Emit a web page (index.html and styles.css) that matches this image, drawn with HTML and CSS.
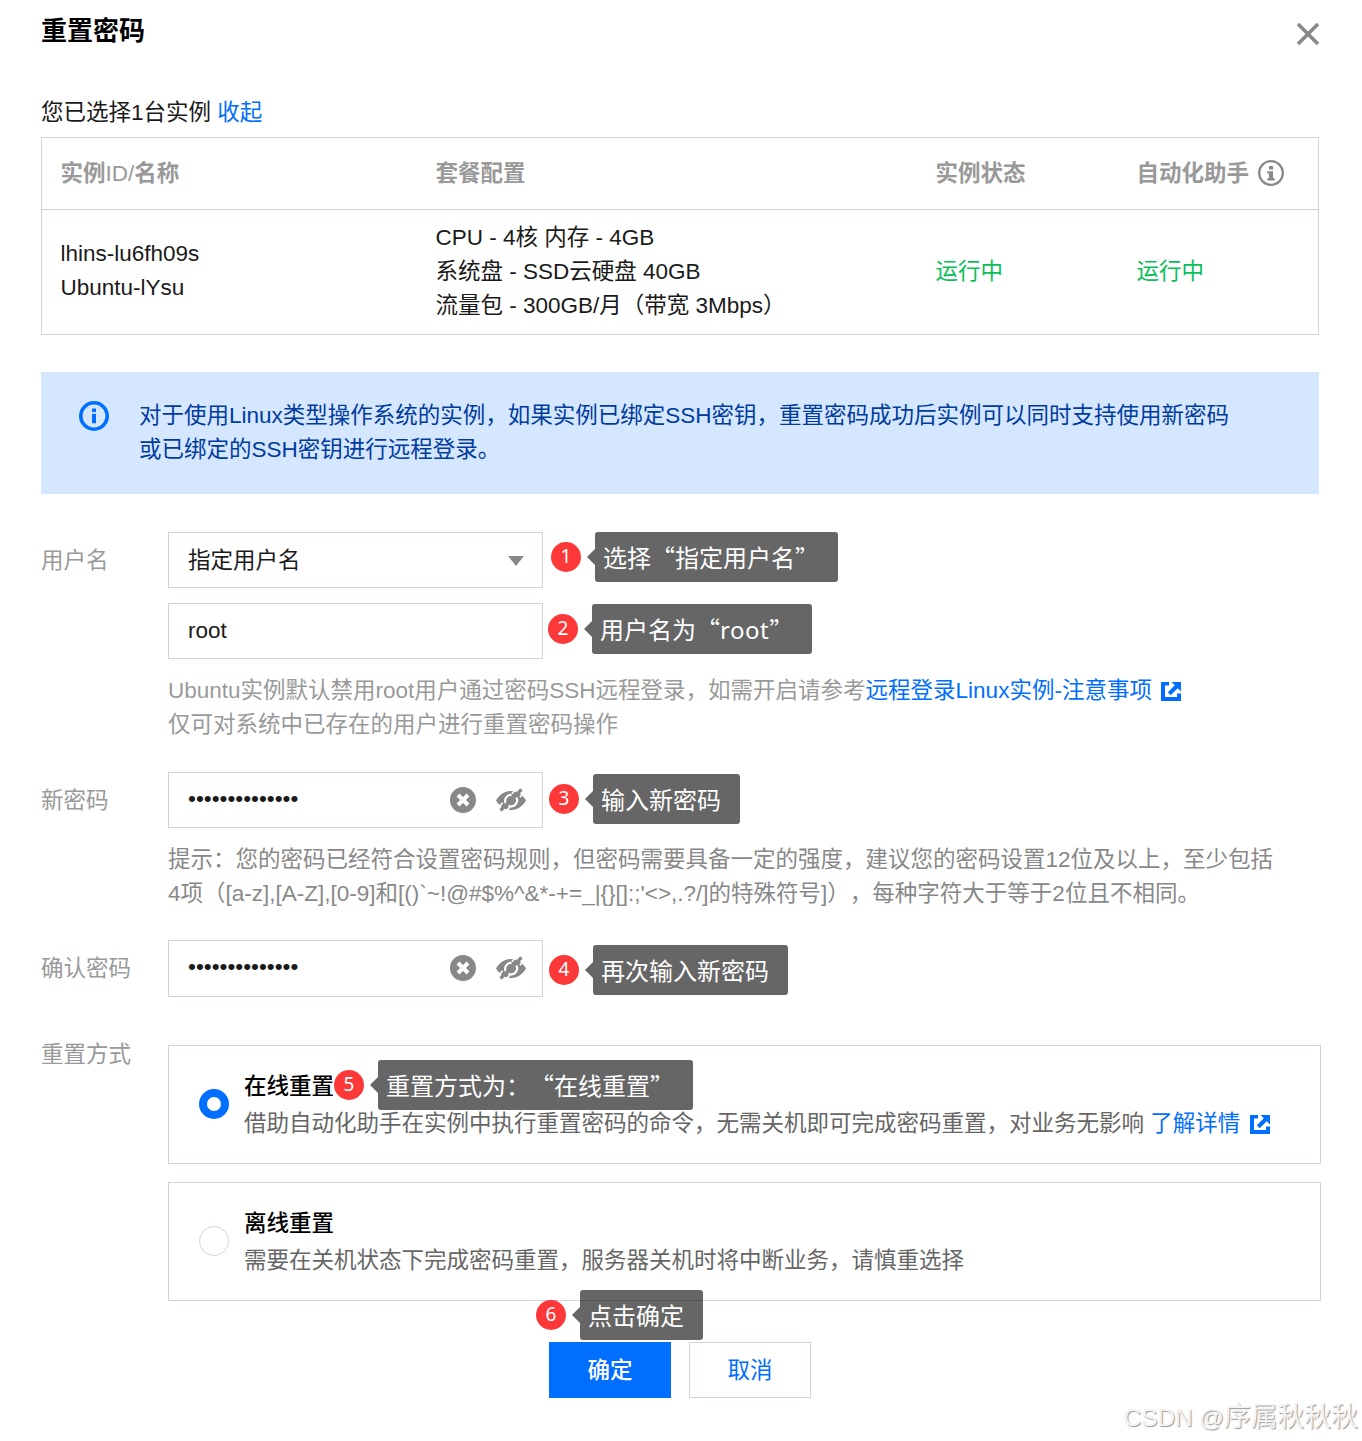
FILE: index.html
```html
<!DOCTYPE html>
<html lang="zh-CN">
<head>
<meta charset="utf-8">
<title>重置密码</title>
<link rel="stylesheet" href="styles.css">
</head>
<body>
<svg class="sprite" width="0" height="0">
  <symbol id="external" viewBox="0 0 20 20"><path fill="currentColor" d="M0 1h8v3.500H4v11.500h12v-3.500h4V20H0zM10.500 1H20v9.500l-3.300-3.300-7 7-2.900-2.900 7-7z"/></symbol>
  <symbol id="clear" viewBox="0 0 26 26"><circle cx="13" cy="13" r="13" fill="currentColor"/><path d="M8 8l10 10M18 8L8 18" stroke="#fff" stroke-width="4"/></symbol>
  <symbol id="eye-off" viewBox="0 0 30 24"><path fill="currentColor" d="M0 12.500C4 6 9 3 15 3s11 3 15 9.500c-4 6.500-9 9.500-15 9.500S4 19 0 12.500z"/><path d="M9.800 15.500A6 6 0 0 1 15.500 6.800M20.300 9.500A6 6 0 0 1 12.500 17.800" fill="none" stroke="#fff" stroke-width="2.200"/><path d="M1 20.500L21.500 0M9 24L29 4" stroke="#fff" stroke-width="1.600" stroke-dasharray="8 13 12"/><path d="M4.500 22.500L25.500 1.500" stroke="currentColor" stroke-width="3.200"/></symbol>
</svg>
<main class="dialog">
  <header class="dialog-head">
    <h1>重置密码</h1>
    <svg class="close" viewBox="0 0 22 22"><path d="M1 1l20 20M21 1L1 21"/></svg>
  </header>

  <p class="summary">您已选择1台实例 <a>收起</a></p>

  <section class="table">
    <div class="row table-head">
      <div>实例<span class="latin">ID/</span>名称</div><div>套餐配置</div><div>实例状态</div>
      <div class="with-icon">自动化助手
        <svg class="info" viewBox="0 0 26 26"><circle cx="13" cy="13" r="11.800" fill="none" stroke="currentColor" stroke-width="2.300"/><path fill="currentColor" d="M11 6h4v3.500h-4zM9.300 11.300H15v7h1.700v2.200H9.300v-2.200H11v-4.800H9.300z"/></svg>
      </div>
    </div>
    <div class="row table-body">
      <div>lhins-lu6fh09s<br>Ubuntu-lYsu</div>
      <div class="plan">CPU - 4核 内存 - 4GB<br>系统盘 - SSD云硬盘 40GB<br>流量包 - 300GB/月（带宽 3Mbps）</div>
      <div class="running">运行中</div>
      <div class="running">运行中</div>
    </div>
  </section>

  <section class="alert">
    <svg class="alert-icon" viewBox="0 0 30 30"><circle cx="15" cy="15" r="13.200" fill="none" stroke="currentColor" stroke-width="3.600"/><path fill="currentColor" d="M13 7.500h4v3.500h-4zM13 12.800h4v9.500h-4z"/></svg>
    <p>对于使用Linux类型操作系统的实例，如果实例已绑定SSH密钥，重置密码成功后实例可以同时支持使用新密码<br>或已绑定的SSH密钥进行远程登录。</p>
  </section>

  <section class="form">
    <div class="field user">
      <label>用户名</label>
      <div>
        <div class="input select"><span class="value">指定用户名</span><svg class="caret" viewBox="0 0 16 10"><path d="M0 0h16L8 10z" fill="currentColor"/></svg></div>
        <div class="input second">root</div>
        <p class="hint light">Ubuntu实例默认禁用root用户通过密码SSH远程登录，如需开启请参考<a>远程登录Linux实例-注意事项 <svg class="ext"><use href="#external"/></svg></a><br>仅可对系统中已存在的用户进行重置密码操作</p>
      </div>
    </div>
    <div class="field password">
      <label>新密码</label>
      <div>
        <div class="input"><span class="dots">••••••••••••••</span><span class="tools"><svg class="clear"><use href="#clear"/></svg><svg class="eye"><use href="#eye-off"/></svg></span></div>
        <p class="hint">提示：您的密码已经符合设置密码规则，但密码需要具备一定的强度，建议您的密码设置12位及以上，至少包括<br>4项（[a-z],[A-Z],[0-9]和[()`~!@#$%^&amp;*-+=_|{}[]:;'&lt;&gt;,.?/]的特殊符号]），每种字符大于等于2位且不相同。</p>
      </div>
    </div>
    <div class="field confirm">
      <label>确认密码</label>
      <div>
        <div class="input"><span class="dots">••••••••••••••</span><span class="tools"><svg class="clear"><use href="#clear"/></svg><svg class="eye"><use href="#eye-off"/></svg></span></div>
      </div>
    </div>
    <div class="field mode">
      <label>重置方式</label>
      <div class="options">
        <div class="option"><i class="radio checked"></i><div><h2>在线重置</h2><p>借助自动化助手在实例中执行重置密码的命令，无需关机即可完成密码重置，对业务无影响 <a>了解详情 <svg class="ext"><use href="#external"/></svg></a></p></div></div>
        <div class="option"><i class="radio"></i><div><h2>离线重置</h2><p>需要在关机状态下完成密码重置，服务器关机时将中断业务，请慎重选择</p></div></div>
      </div>
    </div>
  </section>

  <footer class="actions"><button class="btn primary">确定</button><button class="btn">取消</button></footer>

  <div class="note n1"><b>1</b><span>选择“指定用户名”</span></div>
  <div class="note n2"><b>2</b><span>用户名为“<em>root</em>”</span></div>
  <div class="note n3"><b>3</b><span>输入新密码</span></div>
  <div class="note n4"><b>4</b><span>再次输入新密码</span></div>
  <div class="note n5"><b>5</b><span>重置方式为：“在线重置”</span></div>
  <div class="note n6"><b>6</b><span>点击确定</span></div>
  <div class="watermark">CSDN @<span>序属秋秋秋</span></div>
</main>
</body>
</html>
```

FILE: styles.css
```css
* { box-sizing: border-box; margin: 0; padding: 0; }
body {
  background: #fff;
  color: #1a1a1a;
  font: 22.5px/34px "Liberation Sans", "Noto Sans CJK SC", sans-serif;
  text-spacing-trim: space-all;
}
.sprite { display: block; height: 0; }
a { color: #006eff; }
.dialog {
  position: relative;
  width: 1362px;
  height: 1441px;
  padding: 0 43px 0 41px;
  overflow: hidden;
  white-space: nowrap;
}
.dialog-head { display: flex; justify-content: space-between; height: 62px; }
h1 { color: #000; font-size: 26px; line-height: 62px; font-weight: 700; }
.close { width: 22px; height: 22px; margin-top: 23px; overflow: visible; stroke: #888; stroke-width: 3.6; }
.summary { margin: 34px 0 7px; }

.table { height: 198px; border: 1px solid #cfd5de; }
.row { display: grid; grid-template-columns: 375px 500px 201px 200px; }
.row > div { padding-left: 18.5px; }
.table-head { height: 72px; border-bottom: 1px solid #cfd5de; color: #999; font-weight: 700; line-height: 71px; }
.latin { font-weight: 400; }
.table-body { align-items: center; height: 122px; }
.with-icon { display: flex; align-items: center; gap: 9px; }
.info { width: 26px; height: 26px; margin-top: -1px; color: #888; }
.plan { padding-top: 1px; }
.running { padding-top: 2px; color: #0abf5b; }

.alert { display: flex; height: 122px; margin-top: 37px; padding: 27px 38px 25px; background: #d5e7ff; color: #003b9e; }
.alert-icon { flex: none; width: 30px; height: 30px; margin: 2px 30px 0 0; color: #006eff; }

.form { margin-top: 38px; }
.field { display: grid; grid-template-columns: 127px 1153px; }
.field label { color: #999; line-height: 58px; }
.user { height: 240px; }
.password { height: 168px; }
.confirm { height: 105px; }
.input {
  display: flex;
  align-items: center;
  justify-content: space-between;
  width: 375px;
  height: 56px;
  padding: 0 16px 0 19px;
  border: 1px solid #cfd5de;
}
.confirm .input { height: 57px; padding-bottom: 1px; }
.value { padding-top: 2px; }
.dots { padding-bottom: 2px; }
.second { margin-top: 15px; }
.caret { width: 16px; height: 10px; margin: 1px 2px 0 0; color: #888; }
.tools { display: flex; align-items: center; gap: 20px; color: #888; }
.clear { width: 26px; height: 26px; }
.eye { width: 30px; height: 24px; overflow: visible; }
.hint { margin-top: 15px; color: #888; }
.light { color: #999; }
.ext { width: 20px; height: 20px; margin-left: 3px; vertical-align: -3px; }

.mode label { line-height: 20px; }
.options { display: grid; gap: 18px; }
.option { display: flex; align-items: center; gap: 15px; height: 119px; padding: 0 30px; border: 1px solid #cfd5de; }
.option h2 { padding-top: 1px; color: #000; font-size: 22.5px; font-weight: 500; line-height: 34px; }
.option p { margin-top: 3px; color: #666; }
.radio { width: 30px; height: 30px; margin-bottom: 2px; border: 1px solid #cfd5de; border-radius: 50%; }
.radio.checked { border: 8px solid #006eff; }

.actions { display: flex; gap: 18px; margin: 41px 0 0 508px; }
.btn { width: 122px; height: 56px; padding-top: 1px; border: 1px solid #cfd5de; background: #fff; color: #006eff; font: inherit; }
.primary { border-color: #006eff; background: #006eff; color: #fff; font-weight: 500; }

.note { position: absolute; display: flex; align-items: center; gap: 14px; height: 50px; }
.note b {
  width: 30px;
  height: 30px;
  border-radius: 50%;
  background: #fc3838;
  color: #fff;
  font: 400 19px/29px "Noto Sans", sans-serif;
  text-align: center;
}
.note span {
  position: relative;
  height: 50px;
  padding: 0 19px 0 8px;
  border-radius: 3px;
  background: rgba(0, 0, 0, .6);
  color: #fff;
  font: 24px/49px "Noto Sans CJK SC", sans-serif;
}
.note span::before {
  content: "";
  position: absolute;
  left: -8px;
  top: 17px;
  border: solid transparent;
  border-width: 8px 8px 8px 0;
  border-right-color: rgba(0, 0, 0, .6);
}
.note em { font: normal 24px "Noto Sans", sans-serif; letter-spacing: .5px; }
.n1 { left: 551px; top: 532px; }
.n2 { left: 548px; top: 604px; }
.n3 { left: 549px; top: 774px; }
.n4 { left: 549px; top: 945px; }
.n5 { left: 334px; top: 1060px; }
.n6 { left: 536px; top: 1290px; }
.watermark {
  position: absolute;
  right: 4px;
  bottom: 5px;
  color: #f4f4f4;
  font: 24.3px/36px "Liberation Sans", "Noto Sans CJK SC", sans-serif;
  text-shadow: 1px 1px 1px #999;
}
.watermark span { font-size: 26.8px; }
```
